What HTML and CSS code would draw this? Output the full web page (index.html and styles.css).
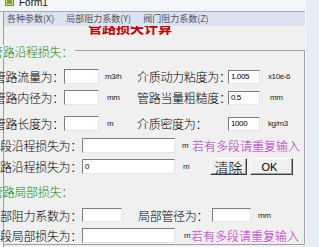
FILE: index.html
```html
<!DOCTYPE html>
<html>
<head>
<meta charset="utf-8">
<link rel="stylesheet" href="styles.css">
</head>
<body>
<div class="screen">
  <div class="window">
    <div class="titlebar">
      <svg class="icon" viewBox="0 0 9 9" width="9" height="9"><rect x="0.5" y="0.5" width="8" height="8" fill="#e8d86a" stroke="#7a8a3a"/><rect x="2" y="2" width="5" height="5" fill="#6aa84f"/></svg>
      <span class="caption">Form1</span>
    </div>
    <div class="main">
      <div class="menubar">
        <span>各种参数(X)</span>
        <span>局部阻力系数(Y)</span>
        <span>阀门阻力系数(Z)</span>
      </div>
      <div class="client">
        <div class="title">管路损失计算</div>
        <div class="frame">
          <div class="cap">管路沿程损失：</div>

          <div class="row r1">
            <span class="lbl w76">管路流量为：</span>
            <div class="tb w35"></div>
            <span class="unit ml6 w32">m3/h</span>
            <span class="lbl2 w91">介质动力粘度为：</span>
            <div class="tb w32 h14">1.005</div>
            <span class="unit ml8">x10e-6</span>
          </div>

          <div class="row r2">
            <span class="lbl w76">管路内径为：</span>
            <div class="tb w35"></div>
            <span class="unit ml8 w30">mm</span>
            <span class="lbl2 w91">管路当量粗糙度：</span>
            <div class="tb w32 h14">0.5</div>
            <span class="unit ml10">mm</span>
          </div>

          <div class="row r3">
            <span class="lbl w76">管路长度为：</span>
            <div class="tb w35"></div>
            <span class="unit ml8 w30">m</span>
            <span class="lbl2 w91">介质密度为：</span>
            <div class="tb w32 h14">1000</div>
            <span class="unit ml8">kg/m3</span>
          </div>

          <div class="row r4">
            <span class="lbl w94">每段沿程损失为：</span>
            <div class="tb w93"></div>
            <span class="unit ml7 w10">m</span>
            <span class="note">若有多段请重复输入</span>
          </div>

          <div class="row r5">
            <span class="lbl w94">管路沿程损失为：</span>
            <div class="tb w93">0</div>
            <span class="unit ml8 w27">m</span>
            <div class="btn btn-cn">清除</div>
            <div class="btn btn-ok">OK</div>
          </div>

          <div class="cap cap-b">管路局部损失：</div>

          <div class="row r7">
            <span class="lbl w94">局部阻力系数为：</span>
            <div class="tb w40 h14"></div>
            <span class="lbl2 ml16 w74">局部管径为：</span>
            <div class="tb w39 h14"></div>
            <span class="unit ml7">mm</span>
          </div>

          <div class="row r8">
            <span class="lbl w94">每段局部损失为：</span>
            <div class="tb w93"></div>
            <span class="unit ml9 w7">m</span>
            <span class="note">若有多段请重复输入</span>
          </div>
        </div>
      </div>
    </div>
  </div>
  <div class="desk"></div>
</div>
</body>
</html>
```

FILE: styles.css
```css
* { box-sizing: border-box; }
html, body { margin: 0; padding: 0; }
body {
  width: 319px;
  height: 247px;
  overflow: hidden;
  background: #e8eef6;
  font-family: "Noto Sans CJK SC", "Noto Sans", sans-serif;
}
.screen { display: flex; height: 247px; }
.window {
  width: 305px;
  flex-shrink: 0;
  display: flex;
  flex-direction: column;
}
.desk {
  flex: 1;
  background: #e7edf6;
  border-left: 1px solid #f8fafc;
}
.titlebar {
  height: 11px;
  overflow: hidden;
  display: flex;
  align-items: flex-start;
  background: #f4f5f8;
}
.icon { margin: -3px 0 0 5px; flex-shrink: 0; }
.caption {
  margin: -2px 0 0 5px;
  font: 10px/10px "Liberation Sans", sans-serif;
  color: #111;
}
.main {
  flex: 1;
  border-top: 1px solid #a3a8b1;
  background: linear-gradient(#9c9c9c, #9c9c9c) 3px 0 / 1px 100% no-repeat, #f0f0f0;
  overflow: hidden;
  display: flex;
  flex-direction: column;
}
.menubar {
  margin-left: 4px;
  height: 14px;
  flex-shrink: 0;
  background: #dbe1ee;
  display: flex;
  gap: 12px;
  padding-left: 3px;
  font-size: 9px;
  line-height: 13px;
  color: #555;
  white-space: nowrap;
}
.client { flex: 1; overflow: hidden; }
.title {
  margin-top: -6px;
  padding-left: 88px;
  font-size: 14px;
  line-height: 14px;
  font-weight: bold;
  color: #c00000;
  white-space: nowrap;
}
.frame {
  margin: 16px 0 0 3px;
  height: 195px;
  border-top: 1px solid #a0a0a0;
  border-right: 1px solid #a0a0a0;
  border-bottom: 1px solid #a0a0a0;
}
.cap {
  display: table;
  margin: -6px 0 0 -12px;
  padding-right: 2px;
  background: #f0f0f0;
  color: #128a12;
  font-size: 12px;
  font-weight: 300;
  line-height: 13px;
  letter-spacing: -0.3px;
  white-space: nowrap;
}
.cap-b { margin-top: 11px; background: none; }

.row {
  display: flex;
  align-items: center;
  height: 15px;
  margin-left: -15px;
  white-space: nowrap;
  font-size: 12px;
  font-weight: 300;
  letter-spacing: -0.3px;
  color: #000;
}
.row > * { flex-shrink: 0; }
.r1 { margin-top: 11px; }
.r2 { margin-top: 6px; }
.r3 { margin-top: 11px; }
.r4 { margin-top: 7px; }
.r5 { margin-top: 6px; }
.r7 { margin-top: 10px; height: 14px; }
.r8 { margin-top: 6px; }

.lbl { display: flex; justify-content: flex-end; line-height: 15px; }
.lbl2 { display: block; line-height: 15px; overflow: visible; }

.tb {
  height: 15px;
  border: 1px solid;
  border-color: #7c7c7c #e6e6e6 #e6e6e6 #7c7c7c;
  background: #fff;
  padding-left: 2px;
  font: 8px/13px "Liberation Sans", sans-serif;
  letter-spacing: -0.4px;
  color: #000;
}
.h14 { height: 14px; line-height: 12px; }
.unit {
  display: block;
  font: 8px/15px "Liberation Sans", sans-serif;
  letter-spacing: -0.4px;
  color: #222;
}
.note {
  color: #c028c8;
  font-size: 12px;
  letter-spacing: 0;
}
.btn {
  height: 17px;
  border: 1px solid;
  border-color: #ffffff #404040 #404040 #ffffff;
  box-shadow: inset -1px -1px 0 #a0a0a0;
  background: #f0f0f0;
  display: flex;
  align-items: center;
  justify-content: center;
  color: #000;
}
.btn-cn { width: 37px; font-size: 14px; letter-spacing: 0; }
.btn-ok {
  width: 43px;
  margin-left: 3px;
  padding-right: 4px;
  font: 11px "Liberation Sans", sans-serif;
  letter-spacing: 0;
}

.w7 { width: 7px; }
.w10 { width: 10px; }
.w27 { width: 27px; }
.w30 { width: 30px; }
.w32 { width: 32px; }
.w35 { width: 35px; }
.w39 { width: 39px; }
.w40 { width: 40px; }
.w74 { width: 74px; }
.w76 { width: 76px; }
.w91 { width: 91px; }
.w93 { width: 93px; }
.w94 { width: 94px; }
.ml6 { margin-left: 6px; }
.ml7 { margin-left: 7px; }
.ml8 { margin-left: 8px; }
.ml9 { margin-left: 9px; }
.ml10 { margin-left: 10px; }
.ml16 { margin-left: 16px; }
```
